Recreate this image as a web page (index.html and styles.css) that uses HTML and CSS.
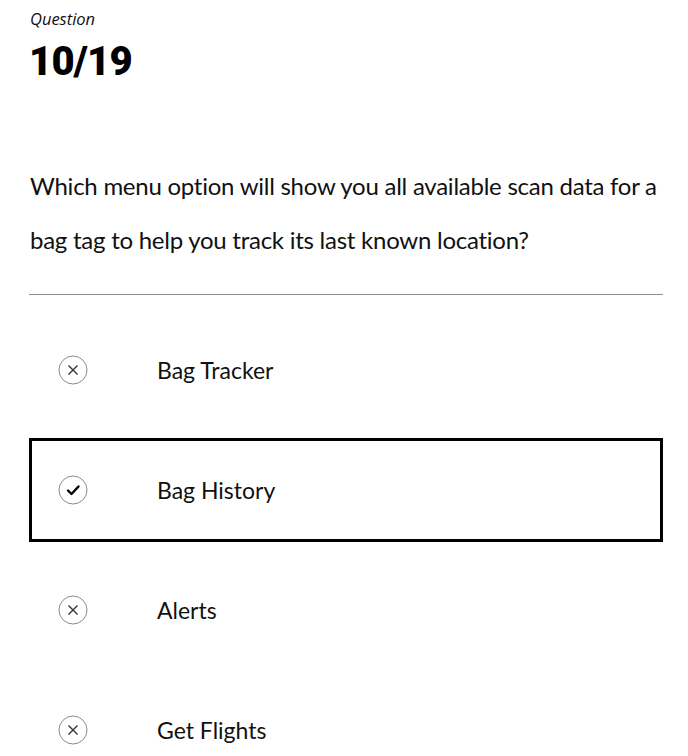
FILE: index.html
```html
<!DOCTYPE html>
<html>
<head>
<meta charset="utf-8">
<link rel="stylesheet" href="styles.css">
</head>
<body>
<main class="quiz">
  <header class="head">
    <div class="label">Question</div>
    <div class="count">10/19</div>
  </header>
  <p class="prompt">Which menu option will show you all available scan data for a bag tag to help you track its last known location?</p>
  <hr class="rule">
  <ul class="options">
    <li class="option">
      <span class="mark"><svg viewBox="0 0 30 30" width="30" height="30"><circle cx="15" cy="15" r="14" fill="none" stroke="#8a8a8a" stroke-width="1"/><path d="M10.5 10.5 L19.5 19.5 M19.5 10.5 L10.5 19.5" stroke="#333" stroke-width="1.4" fill="none"/></svg></span>
      <span class="text">Bag Tracker</span>
    </li>
    <li class="option selected">
      <span class="mark"><svg viewBox="0 0 30 30" width="30" height="30"><circle cx="15" cy="15" r="14" fill="none" stroke="#8a8a8a" stroke-width="1"/><path d="M10 15.5 L13.5 19 L20.5 11.5" stroke="#000" stroke-width="2.4" fill="none" stroke-linecap="round" stroke-linejoin="round"/></svg></span>
      <span class="text">Bag History</span>
    </li>
    <li class="option">
      <span class="mark"><svg viewBox="0 0 30 30" width="30" height="30"><circle cx="15" cy="15" r="14" fill="none" stroke="#8a8a8a" stroke-width="1"/><path d="M10.5 10.5 L19.5 19.5 M19.5 10.5 L10.5 19.5" stroke="#333" stroke-width="1.4" fill="none"/></svg></span>
      <span class="text">Alerts</span>
    </li>
    <li class="option">
      <span class="mark"><svg viewBox="0 0 30 30" width="30" height="30"><circle cx="15" cy="15" r="14" fill="none" stroke="#8a8a8a" stroke-width="1"/><path d="M10.5 10.5 L19.5 19.5 M19.5 10.5 L10.5 19.5" stroke="#333" stroke-width="1.4" fill="none"/></svg></span>
      <span class="text">Get Flights</span>
    </li>
  </ul>
</main>
</body>
</html>
```
FILE: styles.css
```css
html, body {
  margin: 0;
  padding: 0;
  background: #fff;
}
body {
  font-family: Lato, "Liberation Sans", sans-serif;
  color: #111;
}
.quiz {
  width: 634px;
  padding: 0 0 0 29px;
}
.head {
  padding-top: 8px;
}
.label {
  font-family: "Open Sans", sans-serif;
  font-style: italic;
  font-size: 16.5px;
  line-height: 22px;
  color: #111;
  padding-left: 1px;
}
.count {
  font-family: Roboto, sans-serif;
  font-weight: 900;
  font-size: 40px;
  line-height: 52px;
  letter-spacing: -0.8px;
  color: #000;
  margin-top: 6px;
}
.prompt {
  margin: 71px 0 0 1px;
  font-size: 24px;
  line-height: 54px;
  letter-spacing: -0.25px;
  color: #111;
}
.rule {
  margin: 27px 0 0 0;
  border: 0;
  border-top: 1px solid #8c8c8c;
  height: 0;
}
.options {
  list-style: none;
  margin: 23px 0 0 0;
  padding: 0;
  display: flex;
  flex-direction: column;
  gap: 16px;
}
.option {
  height: 104px;
  box-sizing: border-box;
  border: 3px solid transparent;
  display: flex;
  align-items: center;
  padding-left: 26px;
}
.option.selected {
  border-color: #000;
}
.mark {
  width: 30px;
  height: 30px;
  display: flex;
  flex: none;
}
.text {
  margin-left: 69px;
  font-size: 23px;
  color: #111;
}
```
